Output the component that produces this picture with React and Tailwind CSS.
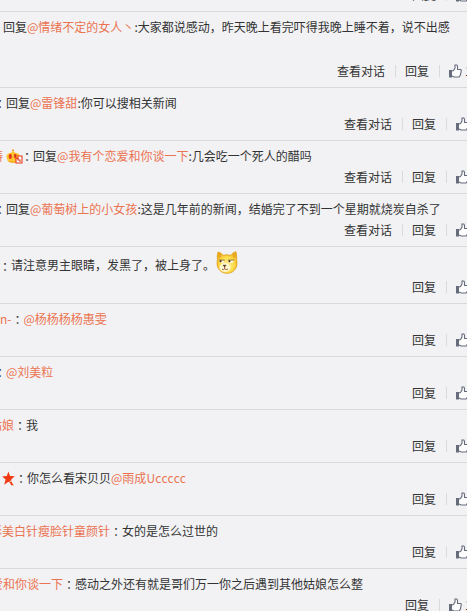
const ThumbIcon = () => (
  <svg width="13" height="14" viewBox="0 0 13 14" className="shrink-0">
    <rect x="0" y="6" width="3" height="7.5" fill="#666c7a" />
    <path
      d="M3 7 4.500 6.500 6 4V1H7.800L8.500 2.200V5.500H11.800L12.300 6.300 11.500 10.900 10.200 13H5.200L3 12"
      fill="#fdfdfe"
      stroke="#666c7a"
      strokeWidth="1.100"
    />
  </svg>
);

const CrownIcon = () => (
  <svg width="17" height="15" viewBox="0 0 17 15" className="shrink-0">
    <circle cx="7" cy="1.4" r="1.1" fill="#f3a321" />
    <path d="M0.300 7.500Q1 4 4.500 4L7 2.300 9.800 4Q13.500 4 14.200 7.500L12.500 12.500Q7 15 2 12.500Z" fill="#fdc52f" />
    <ellipse cx="4.300" cy="7.400" rx="1.600" ry="2.600" fill="#e63a1d" />
    <ellipse cx="9.300" cy="7" rx="1.400" ry="2.300" fill="#e63a1d" />
    <path d="M3 12.500q4 1.400 7 .4" stroke="#ef9d22" fill="none" />
    <path d="M10 9.500h2V7h4v7h-6Z" fill="#fff" stroke="#e63a1d" strokeWidth="1.100" />
    <path d="M12 9v2h2v2" stroke="#e63a1d" strokeWidth="1.100" fill="none" />
  </svg>
);

const StarIcon = () => (
  <svg width="13" height="15" viewBox="0 0 13 15" className="shrink-0">
    <path d="M6.400.5 8.100 5l4.700.3-3.600 3.200 1.400 5-4.200-2.800-4.200 3 1.400-5.100L.1 5.400 4.800 5Z" fill="#f03a12" />
    <path d="M7.800 10.300 12 14.300H9Z" fill="#f03a12" />
    <path d="m7.700 10.600 2-.8.8 1.500" stroke="#fff" strokeWidth=".9" fill="none" />
  </svg>
);

const DogeIcon = () => (
  <svg width="22" height="23" viewBox="0 0 22 23" className="shrink-0">
    <defs>
      <radialGradient id="doge" cx=".5" cy=".6" r=".6">
        <stop offset="0" stopColor="#fff0a0" />
        <stop offset=".6" stopColor="#fddb48" />
        <stop offset="1" stopColor="#f0aa1c" />
      </radialGradient>
    </defs>
    <path
      d="M2 1q3 .3 5 3.300 4-1 8 0Q17 1 20 .7q1 4.300 .6 8 1.200 5-.6 8.300-3 5.300-9 5.300T2 17Q.3 13 1.400 9 .8 4.500 2 1Z"
      fill="url(#doge)"
      stroke="#dfa01c"
      strokeWidth=".8"
    />
    <path d="m3 2.500 2.500 2.500L3 7ZM18.800 2.500 16.500 5l2.500 2Z" fill="#e0a626" />
    <ellipse cx="9" cy="16.500" rx="5.500" ry="4.400" fill="#fff8d0" />
    <path d="M3 9.200h5.500Q8 12 5.500 11.800 3.500 11.500 3 9.200ZM12 9.200h6Q17.500 12 14.500 11.800 12.500 11.500 12 9.200Z" fill="#fff" />
    <path d="M2.800 9.100h6M11.800 9.100h6.400" stroke="#8f6820" strokeWidth=".9" />
    <circle cx="4.600" cy="10.300" r="1" fill="#3c2b12" />
    <circle cx="13.500" cy="10.300" r="1" fill="#3c2b12" />
    <path d="M7 14.200h3.200l-1.600 1.700Z" fill="#3c2b12" stroke="#3c2b12" strokeWidth=".5" />
    <path d="M8.600 15.500v2.300M6 18.200q1.500 1 2.600-.4 1.500 1.400 3.400.2" stroke="#8a3a1c" strokeWidth=".8" fill="none" />
  </svg>
);

const Name = ({ children }) => <span className="text-[#eb7350]">{children}</span>;

// full-width colon, centred in its cell
const Colon = () => (
  <span className="w-3 shrink-0 pt-[2px] pr-px text-center font-['Noto_Sans_CJK_TC',sans-serif]">：</span>
);

const Divider = () => <i className="mr-[9px] ml-[10px] h-3 w-px bg-[#d9d9de]" />;

const Actions = ({ dialog, likes }) => (
  <div className={`flex h-[18px] shrink-0 items-center justify-end ${likes ? "-mr-[5px]" : "-mr-[2px]"}`}>
    {dialog && (
      <>
        <span>查看对话</span>
        <Divider />
      </>
    )}
    <span>回复</span>
    <Divider />
    <ThumbIcon />
    {likes && <span className="ml-[3px] w-[7px]">{likes}</span>}
  </div>
);

const comments = [
  {
    height: "h-[76px]",
    indent: "ml-[3px]",
    dialog: true,
    likes: "1",
    body: <>回复<Name>@情绪不定的女人丶</Name>:大家都说感动，昨天晚上看完吓得我晚上睡不着，说不出感</>,
  },
  {
    indent: "-ml-[6px]",
    dialog: true,
    body: <><Colon />回复<Name>@雷锋甜</Name>:你可以搜相关新闻</>,
  },
  {
    indent: "-ml-[9px]",
    dialog: true,
    body: (
      <>
        <Name>涛</Name>
        <span className="mr-[-2px] ml-[3px]"><CrownIcon /></span>
        <Colon />回复<Name>@我有个恋爱和你谈一下</Name>:几会吃一个死人的醋吗
      </>
    ),
  },
  {
    indent: "-ml-[6px]",
    dialog: true,
    body: <><Colon />回复<Name>@葡萄树上的小女孩</Name>:这是几年前的新闻，结婚完了不到一个星期就烧炭自杀了</>,
  },
  {
    height: "h-[57px]",
    padding: "pt-1 pb-[7px]",
    line: "h-[26px]",
    indent: "-ml-[1px]",
    body: (
      <>
        <span className="flex pt-1"><Colon />请注意男主眼睛，发黑了，被上身了。</span>
        <span className="mb-1 ml-px"><DogeIcon /></span>
      </>
    ),
  },
  { body: <><Name>n-</Name><Colon /><Name>@杨杨杨杨惠雯</Name></> },
  { indent: "-ml-[6px]", body: <><Colon /><Name>@刘美粒</Name></> },
  { indent: "-ml-[10px]", body: <><Name>姑娘</Name><Colon />我</> },
  {
    indent: "ml-[2px]",
    body: (
      <>
        <StarIcon />
        <Colon />你怎么看宋贝贝<Name>@雨成<span className="tracking-[0.3px]">Uccccc</span></Name>
      </>
    ),
  },
  {
    indent: "-ml-[10px]",
    body: <><Name>彩美白针瘦脸针童颜针</Name><Colon />女的是怎么过世的</>,
  },
  {
    indent: "-ml-[9px]",
    likes: "1",
    body: <><Name>爱和你谈一下</Name><Colon />感动之外还有就是哥们万一你之后遇到其他姑娘怎么整</>,
  },
];

const Comment = ({
  height = "h-[53px]",
  padding = "pt-[6px] pb-[7px]",
  line = "h-[18px]",
  indent = "",
  dialog,
  likes,
  body,
}) => (
  <div className={`flex shrink-0 flex-col justify-between border-t border-[#d9d9dd] ${padding} ${height}`}>
    <div className={`flex items-center whitespace-nowrap ${line} ${indent}`}>{body}</div>
    <Actions dialog={dialog} likes={likes} />
  </div>
);

export default function App() {
  return (
    <div className="flex h-[611px] w-[467px] flex-col overflow-hidden bg-[#f2f2f5] font-['Noto_Sans_CJK_SC',sans-serif] text-[12px] leading-[18px] text-[#333]">
      <div className="flex h-[11px] shrink-0 flex-col justify-end overflow-hidden pb-[7px]">
        <Actions />
      </div>
      {comments.map((comment, i) => (
        <Comment key={i} {...comment} />
      ))}
    </div>
  );
}
